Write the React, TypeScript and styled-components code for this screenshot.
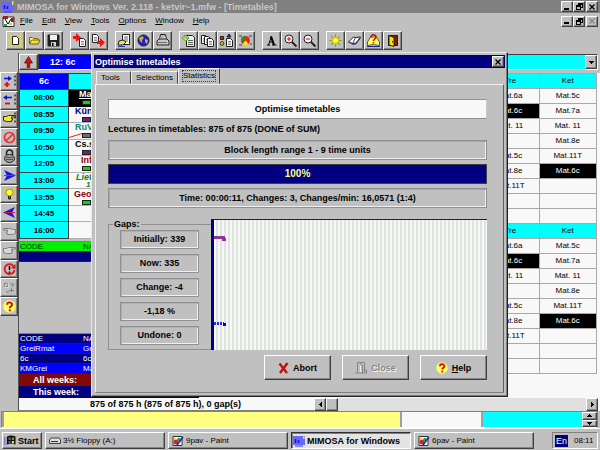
import React from "react";
import styled, { createGlobalStyle, css } from "styled-components";

const GlobalStyle = createGlobalStyle`
  * { box-sizing: border-box; }
  body { margin: 0; background: #c0c0c0; }
  button, input, select {
    font: inherit; color: inherit; margin: 0; padding: 0; border: 0;
    border-radius: 0; background: none; appearance: none;
  }
  svg { display: block; flex: none; }
`;

const raised = css`
  background: #c0c0c0;
  border: 1px solid;
  border-color: #fff #404040 #404040 #fff;
  box-shadow: inset -1px -1px 0 #868686;
`;

const Page = styled.div`
  min-height: 100vh;
  display: flex;
  flex-direction: column;
  background: #c0c0c0;
  color: #000;
  font: 8px/10px "Liberation Sans", Arial, sans-serif;
`;

/* ---------- window frame ---------- */
const TitleBar = styled.header`
  display: flex;
  align-items: center;
  height: 13px;
  padding: 0 2px;
  gap: 3px;
  background: #808080;
  color: #c8c8c8;
  font-weight: bold;
  font-size: 9px;
`;
const Title = styled.h1`
  margin: 0;
  flex: 1;
  font-size: inherit;
  white-space: nowrap;
`;
const FrameButtons = styled.div`
  display: flex;
`;
const FrameButton = styled.button`
  ${raised}
  width: 12px;
  height: 11px;
  display: grid;
  place-items: center;
  color: #000;
  &:last-child { margin-left: 1px; }
  &:disabled { color: #868686; }
`;
const MenuBar = styled.nav`
  display: flex;
  align-items: center;
  height: 16px;
  padding: 0 2px;
`;
const MenuItems = styled.div`
  display: flex;
  flex: 1;
  gap: 9px;
  padding-left: 5px;
`;
const MenuItem = styled.button``;
const Key = styled.span`
  text-decoration: underline;
`;
const Toolbar = styled.div`
  display: flex;
  height: 24px;
  padding: 2px 6px 3px;
  gap: 7px;
`;
const ToolGroup = styled.div`
  display: flex;
`;
const ToolButton = styled.button`
  ${raised}
  width: 19px;
  height: 19px;
  display: grid;
  place-items: center;
`;

/* ---------- work area ---------- */
const Work = styled.div`
  position: relative;
  flex: 1;
  display: flex;
`;
const SideStrip = styled.div`
  width: 19px;
  padding-top: 19px;
  border-right: 1px solid #505050;
`;
const SideButtons = styled.div`
  display: grid;
  grid-template-rows: repeat(13, 1fr);
  height: 244px;
`;
const SideButton = styled.button`
  ${raised}
  display: grid;
  place-items: center;
`;
const Main = styled.main`
  flex: 1;
  min-width: 0;
  display: flex;
  flex-direction: column;
`;
const Picker = styled.div`
  display: flex;
  height: 20px;
  padding: 1px 2px 3px 0;
`;
const UpButton = styled.button`
  ${raised}
  width: 19px;
  display: grid;
  place-items: center;
`;
const ComboBox = styled.div`
  flex: 1;
  display: flex;
  border: 1px solid #404040;
  border-right-color: #fff;
  border-bottom-color: #fff;
`;
const Combo = styled.select`
  flex: 1;
  padding-left: 11px;
  color: #fff;
  font-weight: bold;
  font-size: 9px;
  background: linear-gradient(90deg, #00f 120px, #0ff 120px);
`;
const ComboArrow = styled.span`
  ${raised}
  width: 12px;
  display: grid;
  place-items: center;
  pointer-events: none;
`;
const Panels = styled.div`
  flex: 1;
  display: flex;
`;
const LeftPanel = styled.section`
  width: 180px;
  display: flex;
  flex-direction: column;
`;
const DayTable = styled.table`
  width: 100%;
  height: 166px;
  border-collapse: collapse;
  table-layout: fixed;
  tr { height: 16px; }
  th, td { padding: 0; border: 1px solid #404040; font-size: 9px; line-height: 9px; font-weight: bold; }
  th { background: #0ff; }
  thead th:first-child { background: #00f; color: #fff; }
  tbody th { font-size: 8px; }
`;
const TimeColumn = styled.col`
  width: 49px;
`;
const Lesson = styled.td<{ $ink: string; $dark?: boolean }>`
  text-align: left;
  color: ${(p) => p.$ink};
  background: ${(p) => (p.$dark ? "#000" : "#f8f8f8")};
  && { border-color: ${(p) => (p.$dark ? "#000" : "#b0b0b0")}; }
`;
const LessonBody = styled.div<{ $indent: number; $slant?: boolean; $line?: boolean }>`
  display: flex;
  flex-direction: column;
  justify-content: space-between;
  height: 15px;
  overflow: hidden;
  font-style: ${(p) => (p.$slant ? "italic" : "normal")};
  > span {
    padding-left: ${(p) => p.$indent}px;
    text-decoration: ${(p) => (p.$line ? "underline" : "none")};
  }
`;
const LessonNote = styled.small`
  padding-left: 17px;
  font-size: 8px;
  line-height: 6px;
`;
const MarkRow = styled.div`
  display: flex;
  justify-content: flex-start;
`;
const MarkLead = styled.div`
  width: 13px;
`;
const Mark = styled.i<{ $fill: string }>`
  width: 9px;
  height: 5px;
  background: ${(p) => p.$fill};
  border: 1px solid #202020;
`;
const CodeList = styled.div`
  border-top: 1px solid #808080;
  margin-top: 2px;
`;
const CodeRow = styled.div<{ $bg: string; $ink: string }>`
  display: flex;
  height: 10px;
  padding-left: 1px;
  line-height: 9px;
  border-bottom: 1px solid #202040;
  background: ${(p) => p.$bg};
  color: ${(p) => p.$ink};
  span:first-child { width: 63px; }
`;
const Spacer = styled.div`
  flex: 1;
`;
const WeekRow = styled.div<{ $bg: string }>`
  height: 12px;
  padding-left: 14px;
  line-height: 12px;
  font-size: 9px;
  font-weight: bold;
  color: #fff;
  background: ${(p) => p.$bg};
`;
const RightPanel = styled.section`
  flex: 1;
  display: flex;
  justify-content: flex-end;
  align-items: flex-start;
  background: #f8f8f8;
  padding-right: 3px;
`;
const ClassTable = styled.table`
  border-collapse: collapse;
  table-layout: fixed;
  width: 116px;
  background: #f8f8f8;
  tr { height: 15px; }
  th, td { padding: 0; border: 1px solid #a8a8a8; text-align: center; line-height: 10px; }
  th { background: #0ff; font-weight: normal; }
`;
const ClassCell = styled.td<{ $on?: boolean }>`
  background: ${(p) => (p.$on ? "#000" : "#f8f8f8")};
  color: ${(p) => (p.$on ? "#fff" : "#000")};
`;
const StatusRow = styled.div`
  display: flex;
  height: 13px;
  padding-right: 2px;
  background: #f8f8f8;
`;
const StatusText = styled.div`
  width: 295px;
  padding-left: 71px;
  font-size: 9px;
  line-height: 13px;
  font-weight: bold;
  border-bottom: 1px solid #808080;
`;
const ScrollBar = styled.div`
  flex: 1;
  display: flex;
  background: #e0e0e0;
`;
const ScrollButton = styled.button`
  ${raised}
  width: 12px;
  display: grid;
  place-items: center;
  &:last-child { margin-left: auto; }
`;

/* ---------- message bar ---------- */
const MessageBar = styled.div`
  display: flex;
  height: 17px;
  margin: 0 2px 0 1px;
  border: 1px solid #808080;
  border-bottom-color: #fff;
`;
const MessageCell = styled.div<{ $bg: string; $grow: number }>`
  flex: ${(p) => p.$grow} 1 0;
  background: ${(p) => p.$bg};
  border-left: 2px solid #a0a0a0;
`;
const Spinner = styled.div`
  display: grid;
  width: 15px;
`;
const SpinButton = styled.button`
  ${raised}
  display: grid;
  place-items: center;
  min-height: 0;
`;

/* ---------- taskbar ---------- */
const TaskBar = styled.footer`
  display: flex;
  align-items: center;
  height: 22px;
  padding: 2px 2px 0 2px;
  gap: 3px;
  border-top: 1px solid #fff;
`;
const TaskButton = styled.button<{ $active?: boolean; $start?: boolean }>`
  ${raised}
  ${(p) =>
    p.$active &&
    css`
      background: #e4e4e4;
      border-color: #303030 #fff #fff #303030;
      box-shadow: inset 1px 1px 0 #808080;
    `}
  flex: ${(p) => (p.$start ? "0 0 40px" : "0 1 120px")};
  height: 17px;
  display: flex;
  align-items: center;
  gap: 2px;
  padding-left: ${(p) => (p.$active || p.$start ? "1px" : "3px")};
  white-space: nowrap;
  font-size: ${(p) => (p.$active || p.$start ? "9px" : "8px")};
  font-weight: ${(p) => (p.$active || p.$start ? "bold" : "normal")};
`;
const Tray = styled.div`
  margin-left: auto;
  width: 46px;
  height: 17px;
  display: flex;
  align-items: center;
  gap: 6px;
  padding-left: 2px;
  border: 1px solid;
  border-color: #808080 #fff #fff #808080;
`;
const Language = styled.span`
  width: 13px;
  line-height: 12px;
  text-align: center;
  font-size: 9px;
  color: #fff;
  background: #000080;
`;

/* ---------- dialog ---------- */
const Dialog = styled.section`
  position: absolute;
  top: -1px;
  left: 91px;
  right: 92px;
  padding: 2px;
  background: #c0c0c0;
  border: 1px solid;
  border-color: #e8e8e8 #202020 #202020 #e8e8e8;
  box-shadow: inset -1px -1px 0 #808080;
  font-size: 9px;
  font-weight: bold;
`;
const DialogTitle = styled.header`
  display: flex;
  align-items: center;
  justify-content: space-between;
  height: 13px;
  padding: 0 1px;
  background: #000080;
  color: #fff;
`;
const DialogName = styled.h2`
  margin: 0;
  font-size: inherit;
`;
const Tabs = styled.div`
  display: flex;
  align-items: flex-end;
  height: 16px;
  padding-left: 2px;
`;
const Tab = styled.button<{ $on?: boolean }>`
  height: ${(p) => (p.$on ? "16px" : "13px")};
  min-width: 35px;
  padding: 0 4px;
  border: 1px solid;
  border-color: #f0f0f0 #404040 transparent #f0f0f0;
  font-size: 8px;
  font-weight: normal;
  text-align: left;
  span { display: block; outline: ${(p) => (p.$on ? "1px dotted #404040" : "none")}; }
`;
const TabPanel = styled.div`
  margin: 0 1px 1px;
  padding: 14px 16px 12px 12px;
  border: 1px solid;
  border-color: #f0f0f0 #606060 #808080 #f0f0f0;
  display: flex;
  flex-direction: column;
`;
const Strip = styled.div<{ $kind?: "white" | "bar" }>`
  height: 20px;
  margin-bottom: 4px;
  line-height: 18px;
  text-align: center;
  border: 1px solid #909090;
  box-shadow: inset 1px 1px 0 #a8a8a8, inset -1px -1px 0 #f0f0f0;
  ${(p) =>
    p.$kind === "white" &&
    css`
      background: #f8f8f8;
      box-shadow: none;
      border-color: #909090 #c8c8c8 #909090 #909090;
    `}
  ${(p) =>
    p.$kind === "bar" &&
    css`
      background: #000080;
      color: #ffff80;
      font-size: 10px;
      box-shadow: none;
      border-color: #404040;
    `}
`;
const Note = styled.p`
  margin: 0;
  height: 17px;
  line-height: 12px;
`;
const GapRow = styled.div`
  display: flex;
  margin-top: 6px;
  margin-bottom: 5px;
`;
const GapBox = styled.fieldset`
  width: 103px;
  margin: 0;
  padding: 0 11px 4px;
  border: 1px solid #909090;
  border-right: 0;
  display: grid;
  row-gap: 5px;
  legend { padding: 0 1px; margin-left: -7px; line-height: 12px; }
`;
const GapValue = styled.div`
  height: 19px;
  width: 79px;
  line-height: 17px;
  text-align: center;
  border: 1px solid #909090;
  box-shadow: inset 1px 1px 0 #b0b0b0, inset -1px -1px 0 #f0f0f0;
`;
const Graph = styled.div`
  flex: 1;
  margin-top: 1px;
  border-top: 1px solid #202020;
  border-left: 3px solid #000080;
  background: repeating-linear-gradient(90deg, #f6f8f6 0 2px, #e0e4e0 2px 4px);
`;
const Actions = styled.div`
  display: flex;
  justify-content: flex-end;
  gap: 11px;
`;
const Action = styled.button`
  ${raised}
  width: 67px;
  height: 25px;
  display: flex;
  align-items: center;
  justify-content: center;
  gap: 4px;
  &:disabled { color: #868686; text-shadow: 1px 1px 0 #fff; }
`;

/* ---------- glyphs ---------- */
const Arrow = ({ d, w = 5, h = 5 }: { d: string; w?: number; h?: number }) => (
  <svg width={w} height={h} viewBox={`0 0 ${w} ${h}`} shapeRendering="crispEdges"><path d={d} fill="#000" /></svg>
);
const Cross = () => (
  <svg width="6" height="6" viewBox="0 0 6 6"><path d="M0.5 0.5L5.5 5.5M5.5 0.5L0.5 5.5" stroke="currentColor" strokeWidth="1.4" /></svg>
);
const Bar = () => (
  <svg width="6" height="6" viewBox="0 0 6 6"><path d="M0 5h5" stroke="currentColor" strokeWidth="2" /></svg>
);
const Restore = () => (
  <svg width="7" height="7" viewBox="0 0 7 7" fill="none" stroke="currentColor" shapeRendering="crispEdges">
    <path d="M2.500 2.500V0.500H6.500V4.500H4.500M2 1h5M0.500 2.500H4.500V6.500H0.500ZM0 3.500h5" />
  </svg>
);
const AppIcon = () => (
  <svg width="12" height="12" viewBox="0 0 12 12">
    <path d="M0 1h12v9H0z" fill="#6868ff" /><path d="M2.500 4v4M5.500 5v3" stroke="#1818c8" strokeWidth="1.500" fill="none" />
    <path d="M10 0h1.500v4H10z" fill="#f0e040" /><path d="M2 11h8" stroke="#3030ff" />
  </svg>
);
const PaintIcon = () => (
  <svg width="12" height="12" viewBox="0 0 12 12">
    <path d="M1 1.500h9v9H1z" fill="#fff" stroke="#303030" /><circle cx="4" cy="7" r="2.500" fill="#e02020" />
    <circle cx="7" cy="4.500" r="1.800" fill="#20a040" /><path d="M5 10L11 2" stroke="#2020c0" strokeWidth="1.500" /><path d="M2 3h2v2H2z" fill="#f0d020" />
  </svg>
);
const I = ({ children }: { children: React.ReactNode }) => (
  <svg width="15" height="15" viewBox="0 0 15 15" fill="none" stroke="#202020" strokeWidth="1">{children}</svg>
);
const Doc = ({ x, y, fill = "#fff" }: { x: number; y: number; fill?: string }) => (
  <g transform={`translate(${x} ${y})`}><path d="M.5.5h4l2 2v6h-6z" fill={fill} /><path d="M2 3.500h3M2 5h3M2 6.500h3" stroke="#606060" strokeWidth=".7" /></g>
);
const Question = ({ size = 12 }: { size?: number }) => (
  <svg width={size} height={size} viewBox="0 0 12 12">
    <circle cx="6" cy="6" r="5.700" fill="#ffff60" />
    <path d="M3.800 4.300C3.800 1.500 8.400 1.500 8.400 4.200C8.400 5.800 6.200 5.800 6.200 7.600" fill="none" stroke="#e00000" strokeWidth="1.700" /><path d="M5.300 8.700h1.900v1.700H5.300z" fill="#e00000" />
  </svg>
);

const toolGroups: { label: string; art: React.ReactNode }[][] = [
  [
    { label: "New", art: <I><path d="M1 1l3 3M14 1l-3 3M1 14l3-3M14 14l-3-3M7.500 0v2M0 7.500h3M12 7.500h3M7.500 13v2" stroke="#e8e000" strokeWidth="1.500" /><path d="M4.500 3.500h4l2 2v6h-6z" fill="#fff" /></I> },
    { label: "Open", art: <I><path d="M2.500 11V4.500h3l1 1h4v2" fill="#ffff90" stroke="#806000" /><path d="M2.500 11l2-4h8.500l-2 4z" fill="#f0e040" stroke="#806000" /></I> },
    { label: "Save", art: <I><path d="M2 2h11v11H2z" fill="#202020" /><path d="M4 2h7v5H4z" fill="#f0f0f0" stroke="none" /><path d="M5 9h5v4H5z" fill="#d0d0d0" stroke="none" /><path d="M6 10h1.500v3H6z" fill="#000" stroke="none" /></I> },
  ],
  [
    { label: "Import", art: <I><Doc x={7} y={5} /><path d="M1 3h3V0l5 4.500L4 9V6H1z" fill="#f01010" stroke="none" /></I> },
    { label: "Export", art: <I><Doc x={1} y={1} /><path d="M6 8h3V5l5 4.500-5 4.500v-3H6z" fill="#f01010" stroke="none" /></I> },
  ],
  [
    { label: "Edit", art: <I><path d="M5.500 1.500h7v10h-7z" fill="#fff" /><path d="M7 4h4M7 6h4M7 8h4" stroke="#606060" /><path d="M1 12l1-4 4-1 3 2-3 3z" fill="#f0e060" /><path d="M1 13.500h7" stroke="#2040c0" /></I> },
    { label: "World", art: <I><circle cx="7.500" cy="7.500" r="5.500" fill="#2020d0" /><path d="M3 5l3-2 2 2-2 2v3L4 8zM9 6l3 1-1 4-2-2z" fill="#d0b030" stroke="none" /></I> },
    { label: "Print", art: <I><path d="M4.500 6.500l1-5h5l1 5" fill="#fff" /><path d="M2 8l2-2h8l2 2v4H2z" fill="#c8c8c8" /><path d="M6 3h4M5.500 5h4M3 9.500h9" stroke="#707070" /></I> },
  ],
  [
    { label: "Inspect", art: <I><path d="M5.500 2.500h6l2 2v9h-8z" fill="#f0f0e0" /><path d="M7 7.500h5M7 9.500h5M7 11.500h5" stroke="#606060" /><path d="M1 5l3-3 4 3-3 3z" fill="#e8f040" stroke="#709020" /><path d="M3 3.500l4 3" stroke="#20a0a0" /></I> },
    { label: "Copy", art: <I><Doc x={1} y={2} /><Doc x={4} y={3} /><Doc x={7} y={5} /></I> },
    { label: "Sort", art: <I><path d="M1.500 3.500h3v3h-3z" fill="#e02020" /><circle cx="3" cy="10.500" r="1.800" fill="#e8e000" /><Doc x={7} y={5} /><path d="M8 4l2-3 2 3z" fill="#2020c0" /></I> },
    { label: "Chart", art: <I><circle cx="7.500" cy="7.500" r="4.500" fill="#f02020" stroke="none" /><path d="M7.500 7.500V3a4.500 4.500 0 0 0-4.500 4.500z" fill="#10a010" stroke="none" /><path d="M7.500 7.500L4.500 11a4.500 4.500 0 0 0 6 0z" fill="#f0f000" stroke="none" /><path d="M1 3h3M11 3h3M1 12h3M12 11h2" stroke="#404040" /></I> },
  ],
  [
    { label: "Font", art: <I><path d="M3 12h3M8 12h4.500M4.500 12L7.500 3M5.500 9h4" stroke="#000" /><path d="M7 3.500L10 12" stroke="#000" strokeWidth="2.200" /></I> },
    { label: "Zoom in", art: <I><circle cx="6" cy="6" r="4" fill="#f4f4f4" /><path d="M9 9l4.500 4.500" strokeWidth="1.800" /><path d="M4 6h4M6 4v4" stroke="#e00000" /></I> },
    { label: "Zoom out", art: <I><circle cx="6" cy="6" r="4" fill="#f4f4f4" /><path d="M9 9l4.500 4.500" strokeWidth="1.800" /><path d="M4 6h4" stroke="#e00000" /></I> },
  ],
  [
    { label: "Highlight", art: <I><path d="M7.500 1v13M1 7.500h13M3 3l9 9M12 3l-9 9" stroke="#a0a020" strokeWidth="1.200" /><circle cx="7.500" cy="7.500" r="3" fill="#ffff20" stroke="#d0c000" /></I> },
    { label: "Book", art: <I><path d="M1.500 9l5-5 2 .5 5-.5-4.500 6-3 .500z" fill="#fff" /><path d="M8.500 4.500L5.500 11M1.500 9l4.500 2.500 3-.5 4.500-6" stroke="#404080" /></I> },
    { label: "Guide", art: <I><path d="M1.500 12.500V9l3-5h6l3 5v3.500l-6-1z" fill="#ffff60" stroke="#606020" /><path d="M5 4.500C5 1 10 1 10 4C10 6 7.500 6 7.500 8M7.500 9v1.500" stroke="#e00000" strokeWidth="1.500" /><path d="M1 13.500h13" stroke="#2020a0" /></I> },
    { label: "Exit", art: <I><path d="M3.500 2.500h9v10h-9z" fill="#802000" /><path d="M4 2.500l5 2v9l-5-1.500z" fill="#f8e800" /><path d="M7.500 8v1.500" /></I> },
  ],
];

const Dots = () => <path d="M13 1.500v12" stroke="#303030" strokeWidth="1.500" strokeDasharray="2 2" />;
const Hand = ({ flip, fill = "#d8d8d8" }: { flip?: boolean; fill?: string }) => (
  <path transform={flip ? "translate(15 0) scale(-1 1)" : undefined} d="M1.500 5.500h3l2-1h7v1.500H9.500v1.500h1v1.500h-1V10.500H4.500l-3-1z" fill={fill} stroke={fill === "#d8d8d8" ? "#808080" : "#303000"} />
);
const sideTools: { label: string; art: React.ReactNode }[] = [
  { label: "Add", art: <I><path d="M2 4.500h5" stroke="#1010e0" strokeWidth="1.500" /><path d="M6 2l4 2.500L6 7z" fill="#1010e0" stroke="none" /><path d="M5 8v5M2.500 10.500h5" stroke="#e01010" strokeWidth="1.800" /><Dots /></I> },
  { label: "Remove", art: <I><path d="M4 4.500h6" stroke="#1010e0" strokeWidth="1.500" /><path d="M5 2L1 4.500 5 7z" fill="#1010e0" stroke="none" /><path d="M3 10.500h5" stroke="#e01010" strokeWidth="1.800" /><Dots /></I> },
  { label: "Pick", art: <I><Hand fill="#f0e840" /><Dots /></I> },
  { label: "Forbid", art: <I><circle cx="7.500" cy="7.500" r="5" stroke="#f03030" strokeWidth="1.700" /><path d="M4 11l7-7" stroke="#f03030" strokeWidth="1.700" /></I> },
  { label: "Lock", art: <I><path d="M4.500 6V4a3 3 0 0 1 6 0V6" strokeWidth="1.500" /><ellipse cx="7.500" cy="9.500" rx="5" ry="4" fill="#a0a0a0" /><path d="M4 8.500h7M4 10.500h7" stroke="#505050" /></I> },
  { label: "Forward", art: <I><path d="M2 2l12 5.500L2 13l3-5.500z" fill="#1818e0" stroke="none" /><path d="M2 7.500h10" stroke="#e02020" /></I> },
  { label: "Hint", art: <I><path d="M2 2l2 2M13 2l-2 2M1 7h2M12 7h2" stroke="#e0d000" /><circle cx="7.500" cy="6.500" r="3.500" fill="#ffff40" stroke="#a09000" /><path d="M6.500 10v3h2v-3" fill="#606060" /></I> },
  { label: "Back", art: <I><path d="M13 2L1 7.500 13 13l-3-5.500z" fill="#1818e0" stroke="none" /><path d="M13 7.500H3" stroke="#e02020" /></I> },
  { label: "Previous", art: <I><Hand flip /></I> },
  { label: "Next", art: <I><Hand /></I> },
  { label: "Refresh", art: <I><path d="M11.500 4A5 5 0 1 0 12.500 8" stroke="#e81010" strokeWidth="1.800" /><path d="M13.500 2v5l-4.500-1z" fill="#e81010" stroke="none" /><path d="M7.500 4v4M7.500 9.500v1.500" stroke="#000" strokeWidth="1.500" /></I> },
  { label: "Swap", art: <I><path d="M2.500 3.500h3v3h-3zM9.500 8v4M7 10.500h5M8 4h4l-2 3M4 12h3" stroke="#808080" /><path d="M3.500 4.500h3v3h-3z" stroke="#f0f0f0" strokeWidth=".5" /></I> },
  { label: "Help topics", art: <Question size={13} /> },
];

type LessonItem = {
  time: string; name: string; ink: string; indent: number;
  mark?: string; note?: string; dark?: boolean; slant?: boolean; struck?: boolean;
};
const lessons: LessonItem[] = [
  { time: "08:00", name: "Mat", ink: "#fff", indent: 10, mark: "#00e000", dark: true },
  { time: "08:55", name: "Kün", ink: "#000080", indent: 6, mark: "#702080" },
  { time: "09:50", name: "RuV", ink: "#108080", indent: 6, mark: "#707070", struck: true },
  { time: "10:50", name: "Cs.s", ink: "#000", indent: 6, mark: "#702080" },
  { time: "12:05", name: "Inf", ink: "#900000", indent: 12, mark: "#00e000" },
  { time: "13:00", name: "Liet", ink: "#108020", indent: 7, note: "1-", slant: true },
  { time: "13:55", name: "Geo", ink: "#900000", indent: 5, mark: "#00e000" },
  { time: "14:45", name: "", ink: "#000", indent: 6 },
  { time: "16:00", name: "", ink: "#000", indent: 6 },
];

const classes: [string, string][] = [
  ["Mat.6a", "Mat.5c"],
  ["Mat.6c", "Mat.7a"],
  ["Mat. 11", "Mat. 11"],
  ["", "Mat.8e"],
  ["Mat.5c", "Mat.11T"],
  ["Mat.8e", "Mat.6c"],
  ["Mat.11T", ""],
  ["", ""],
  ["", ""],
];
const menus = ["File", "Edit", "View", "Tools", "Options", "Window", "Help"];
const gaps = ["Initially: 339", "Now: 335", "Change: -4", "-1,18 %", "Undone: 0"];

const ClassBlock = () => (
  <tbody>
    <tr><th scope="col">Tre</th><th scope="col">Ket</th></tr>
    {classes.map((pair, i) => (
      <tr key={i}>{pair.map((name, k) => <ClassCell key={k} $on={name === "Mat.6c"}>{name}</ClassCell>)}</tr>
    ))}
  </tbody>
);

const OptimiseDialog = () => (
  <Dialog role="dialog" aria-label="Optimise timetables">
    <DialogTitle>
      <DialogName>Optimise timetables</DialogName>
      <FrameButton aria-label="Close dialog"><Cross /></FrameButton>
    </DialogTitle>
    <Tabs role="tablist">
      <Tab role="tab"><span>Tools</span></Tab>
      <Tab role="tab"><span>Selections</span></Tab>
      <Tab role="tab" aria-selected $on><span>Statistics</span></Tab>
    </Tabs>
    <TabPanel role="tabpanel">
      <Strip $kind="white">Optimise timetables</Strip>
      <Note>Lectures in timetables: 875 of 875 (DONE of SUM)</Note>
      <Strip>Block length range 1 - 9 time units</Strip>
      <Strip $kind="bar">100%</Strip>
      <Strip>Time: 00:00:11, Changes: 3, Changes/min: 16,0571 (1:4)</Strip>
      <GapRow>
        <GapBox>
          <legend>Gaps:</legend>
          {gaps.map((g) => <GapValue key={g}>{g}</GapValue>)}
        </GapBox>
        <Graph>
          <svg width="12" height="110" viewBox="0 0 12 110" fill="none" shapeRendering="crispEdges">
            <path d="M0 17.500h9v2h3" stroke="#883898" strokeWidth="3" />
            <path d="M0 103.500h10" stroke="#2828f0" strokeWidth="3" strokeDasharray="2 1" />
            <path d="M9 104.500h3" stroke="#0000f0" strokeWidth="3" />
          </svg>
        </Graph>
      </GapRow>
      <Actions>
        <Action>
          <svg width="11" height="12" viewBox="0 0 11 12"><path d="M1.500 1.500L9 11M9.500 1L2 11" stroke="#c01010" strokeWidth="2.400" /></svg>
          Abort
        </Action>
        <Action disabled>
          <svg width="12" height="13" viewBox="0 0 12 13" fill="none" stroke="#868686"><path d="M2.500 11.500v-10h7v10M0 12h12M4.500 2l3 2v8M9.500 9h2v3" /><path d="M5.500 5v6" stroke="#f0f0f0" /></svg>
          Close
        </Action>
        <Action><Question /><span><Key>H</Key>elp</span></Action>
      </Actions>
    </TabPanel>
  </Dialog>
);

export default function App() {
  return (
    <Page>
      <GlobalStyle />
      <TitleBar>
        <AppIcon />
        <Title>MIMOSA for Windows Ver. 2.118 - ketvir~1.mfw - [Timetables]</Title>
        <FrameButtons>
          <FrameButton aria-label="Minimise"><Bar /></FrameButton>
          <FrameButton aria-label="Restore"><Restore /></FrameButton>
          <FrameButton aria-label="Close"><Cross /></FrameButton>
        </FrameButtons>
      </TitleBar>
      <MenuBar>
        <svg width="13" height="12" viewBox="0 0 13 12"><path d="M1 2h11v9.500H1z" fill="#fff" stroke="#303030" /><path d="M1 1h5v3H1zM9 3h3v4H9z" fill="#a02020" /><path d="M3 4l3 5 3-5" stroke="#000" fill="none" /><path d="M2 9h3v2H2z" fill="#20a060" /><path d="M7 8h3v2H7z" fill="#e8d020" /></svg>
        <MenuItems>
          {menus.map((m) => <MenuItem key={m}><Key>{m[0]}</Key>{m.slice(1)}</MenuItem>)}
        </MenuItems>
        <FrameButtons>
          <FrameButton aria-label="Minimise child window"><Bar /></FrameButton>
          <FrameButton aria-label="Restore child window"><Restore /></FrameButton>
          <FrameButton aria-label="Close child window" disabled><Cross /></FrameButton>
        </FrameButtons>
      </MenuBar>
      <Toolbar>
        {toolGroups.map((group, i) => (
          <ToolGroup key={i}>
            {group.map((t) => <ToolButton key={t.label} aria-label={t.label}>{t.art}</ToolButton>)}
          </ToolGroup>
        ))}
      </Toolbar>
      <Work>
        <SideStrip>
          <SideButtons>
            {sideTools.map((t) => <SideButton key={t.label} aria-label={t.label}>{t.art}</SideButton>)}
          </SideButtons>
        </SideStrip>
        <Main>
          <Picker>
            <UpButton aria-label="Up"><svg width="9" height="12" viewBox="0 0 9 12"><path d="M4.500 0.500L8.500 7H5.800v4.500H3.200V7H.5z" fill="#d01010" stroke="#301010" strokeWidth=".7" /></svg></UpButton>
            <ComboBox>
              <Combo aria-label="Class"><option>12: 6c</option></Combo>
              <ComboArrow><Arrow d="M0 1h5v1H0zM1 2h3v1H1zM2 3h1v1H2z" /></ComboArrow>
            </ComboBox>
          </Picker>
          <Panels>
            <LeftPanel>
              <DayTable>
                <colgroup><TimeColumn /><col /></colgroup>
                <thead><tr><th scope="col">6c</th><th scope="col" aria-label="Lesson" /></tr></thead>
                <tbody>
                  {lessons.map((l) => (
                    <tr key={l.time}>
                      <th scope="row">{l.time}</th>
                      <Lesson $ink={l.ink} $dark={l.dark}>
                        <LessonBody $indent={l.indent} $slant={l.slant} $line={l.dark}>
                          <span>{l.name}</span>
                          {l.note && <LessonNote>{l.note}</LessonNote>}
                          {l.mark && (
                            <MarkRow>
                              <MarkLead>
                                {l.struck && <svg width="13" height="5" viewBox="0 0 13 5"><path d="M0 4.500L13 .5" stroke="#f02020" /></svg>}
                              </MarkLead>
                              <Mark $fill={l.mark} />
                            </MarkRow>
                          )}
                        </LessonBody>
                      </Lesson>
                    </tr>
                  ))}
                </tbody>
              </DayTable>
              <CodeList>
                <CodeRow $bg="#00f000" $ink="#003000"><span>CODE</span><span>NAME</span></CodeRow>
                <CodeRow $bg="#000080" $ink="#fff" />
              </CodeList>
              <Spacer />
              <CodeList>
                <CodeRow $bg="#000080" $ink="#fff"><span>CODE</span><span>NAME</span></CodeRow>
                <CodeRow $bg="#00f" $ink="#fff"><span>GreiRmat</span><span>Grei</span></CodeRow>
                <CodeRow $bg="#000080" $ink="#fff"><span>6c</span><span>6c</span></CodeRow>
                <CodeRow $bg="#00f" $ink="#fff"><span>KMGrei</span><span>Mat</span></CodeRow>
              </CodeList>
              <WeekRow $bg="#800808">All weeks:</WeekRow>
              <WeekRow $bg="#000080">This week:</WeekRow>
            </LeftPanel>
            <RightPanel>
              <ClassTable><ClassBlock /><ClassBlock /></ClassTable>
            </RightPanel>
          </Panels>
          <StatusRow>
            <StatusText>875 of 875 h (875 of 875 h), 0 gap(s)</StatusText>
            <ScrollBar>
              <ScrollButton aria-label="Scroll left"><Arrow d="M3 0h1v5H3zM2 1h1v3H2zM1 2h1v1H1z" /></ScrollButton>
              <ScrollButton aria-label="Scroll position" />
              <ScrollButton aria-label="Scroll right"><Arrow d="M1 0h1v5H1zM2 1h1v3H2zM3 2h1v1H3z" /></ScrollButton>
            </ScrollBar>
          </StatusRow>
        </Main>
        <OptimiseDialog />
      </Work>
      <MessageBar>
        <MessageCell $bg="#ffff80" $grow={402} />
        <MessageCell $bg="#f8f8f8" $grow={80} />
        <MessageCell $bg="#0ff" $grow={101} />
        <Spinner>
          <SpinButton aria-label="Increase"><Arrow h={3} d="M2 0h1v1H2zM1 1h3v1H1zM0 2h5v1H0z" /></SpinButton>
          <SpinButton aria-label="Decrease"><Arrow h={3} d="M0 0h5v1H0zM1 1h3v1H1zM2 2h1v1H2z" /></SpinButton>
        </Spinner>
      </MessageBar>
      <TaskBar>
        <TaskButton $start>
          <svg width="12" height="11" viewBox="0 0 12 11"><path d="M3 1.500q4-2 8.500 0v8q-4.500-1.500-8.500 0z" fill="#101010" /><path d="M4.500 2.500h2.200v2.500H4.500z" fill="#f03020" /><path d="M7.800 2.500H10v2.500H7.800z" fill="#20c040" /><path d="M4.500 6h2.200v2.500H4.500z" fill="#3060f0" /><path d="M7.800 6H10v2.500H7.800z" fill="#f0e020" /><path d="M0 3h2.500M0 5h2.500M0 7h2.500M0 9h2.500" stroke="#4040c0" strokeDasharray="1 .5" /></svg>
          Start
        </TaskButton>
        <TaskButton>
          <svg width="12" height="8" viewBox="0 0 12 8"><path d="M.5 3l1.500-2h8.500l1 2v3.500H.5z" fill="#e0e0e0" stroke="#404040" /><path d="M2 4.500h7" stroke="#303030" /></svg>
          3½ Floppy (A:)
        </TaskButton>
        <TaskButton><PaintIcon />9pav - Paint</TaskButton>
        <TaskButton $active><AppIcon />MIMOSA for Windows</TaskButton>
        <TaskButton><PaintIcon />6pav - Paint</TaskButton>
        <Tray><Language>En</Language><time>08:11</time></Tray>
      </TaskBar>
    </Page>
  );
}
